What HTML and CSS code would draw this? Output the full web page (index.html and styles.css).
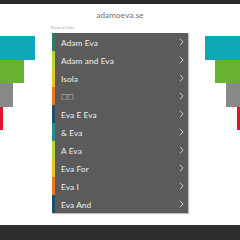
FILE: index.html
```html
<!DOCTYPE html>
<html>
<head>
<meta charset="utf-8">
<link rel="stylesheet" href="styles.css">
</head>
<body>
<div class="topbar"></div>
<header class="head"><span class="domain">adamoeva.se</span></header>
<main class="main">
  <div class="decor decor-left">
    <div class="blk cyan w35"></div>
    <div class="blk green w24"></div>
    <div class="blk gray w13"></div>
    <div class="blk red w3"></div>
  </div>
  <div class="center">
    <div class="label">Related Links</div>
    <ul class="panel">
      <li class="row c1"><span>Adam Eva</span><svg class="chev" viewBox="0 0 6 10"><polyline points="1,1 5,5 1,9"/></svg></li>
      <li class="row c2"><span>Adam and Eva</span><svg class="chev" viewBox="0 0 6 10"><polyline points="1,1 5,5 1,9"/></svg></li>
      <li class="row c3"><span>Isola</span><svg class="chev" viewBox="0 0 6 10"><polyline points="1,1 5,5 1,9"/></svg></li>
      <li class="row c4"><span class="tofu">□□</span><svg class="chev" viewBox="0 0 6 10"><polyline points="1,1 5,5 1,9"/></svg></li>
      <li class="row c5"><span>Eva E Eva</span><svg class="chev" viewBox="0 0 6 10"><polyline points="1,1 5,5 1,9"/></svg></li>
      <li class="row c6"><span>&amp; Eva</span><svg class="chev" viewBox="0 0 6 10"><polyline points="1,1 5,5 1,9"/></svg></li>
      <li class="row c2"><span>A Eva</span><svg class="chev" viewBox="0 0 6 10"><polyline points="1,1 5,5 1,9"/></svg></li>
      <li class="row c3"><span>Eva For</span><svg class="chev" viewBox="0 0 6 10"><polyline points="1,1 5,5 1,9"/></svg></li>
      <li class="row c4"><span>Eva I</span><svg class="chev" viewBox="0 0 6 10"><polyline points="1,1 5,5 1,9"/></svg></li>
      <li class="row c5"><span>Eva And</span><svg class="chev" viewBox="0 0 6 10"><polyline points="1,1 5,5 1,9"/></svg></li>
    </ul>
  </div>
  <div class="decor decor-right">
    <div class="blk cyan w35"></div>
    <div class="blk green w25"></div>
    <div class="blk gray w14"></div>
    <div class="blk red w3"></div>
  </div>
</main>
<footer class="foot"></footer>
</body>
</html>
```
FILE: styles.css
```css
html, body {
  margin: 0;
  padding: 0;
  background: #fff;
  width: 240px;
  height: 240px;
  overflow: hidden;
  font-family: "Lato", "Open Sans", "DejaVu Sans", sans-serif;
}
.topbar {
  height: 4px;
  background: #2c2c2c;
}
.head {
  height: 20px;
  display: flex;
  justify-content: center;
  align-items: center;
  padding-top: 1px;
}
.domain {
  font-size: 8px;
  color: #6a6a6a;
  font-weight: 400;
  letter-spacing: 0.2px;
}
.main {
  display: flex;
  height: 200px;
}
.decor {
  width: 52px;
  display: flex;
  flex-direction: column;
  padding-top: 11px;
}
.decor-left { align-items: flex-start; }
.decor-right { align-items: flex-end; }
.blk { height: 23.5px; }
.cyan { background: #0ea8b9; }
.green { background: #67b22f; }
.gray { background: #888888; }
.red { background: #e2122f; }
.w35 { width: 35px; }
.w24 { width: 24px; }
.w25 { width: 25px; }
.w13 { width: 13px; }
.w14 { width: 14px; }
.w3 { width: 3px; }
.center {
  width: 136px;
  display: flex;
  flex-direction: column;
}
.label {
  font-size: 4px;
  color: #aaa;
  height: 8px;
  line-height: 6px;
  margin-left: -1px;
}
.panel {
  list-style: none;
  margin: 0;
  padding: 0;
  background: #5b5b5b;
  box-shadow: 1px 1px 1px rgba(0,0,0,0.25);
}
.row {
  height: 18px;
  display: flex;
  align-items: center;
  justify-content: space-between;
  border-left: 3px solid #2f7a62;
  padding-left: 6px;
  padding-right: 4px;
  color: #f0f0f0;
  font-size: 8.3px;
  letter-spacing: 0.1px;
}
.row span { padding-top: 1px; }
.row .tofu {
  font-family: "DejaVu Sans", sans-serif;
  font-size: 7px;
  color: #ccc;
  letter-spacing: -0.5px;
}
.c1 { border-left-color: #2f7a62; }
.c2 { border-left-color: #bcd42e; }
.c3 { border-left-color: #e6c31e; }
.c4 { border-left-color: #e5791e; }
.c5 { border-left-color: #1d4d6c; }
.c6 { border-left-color: #2a8d8d; }
.chev {
  width: 5px;
  height: 8px;
  fill: none;
  stroke: #e8e8e8;
  stroke-width: 1;
}
.foot {
  height: 16px;
  background: #2e2e2e;
}
```
